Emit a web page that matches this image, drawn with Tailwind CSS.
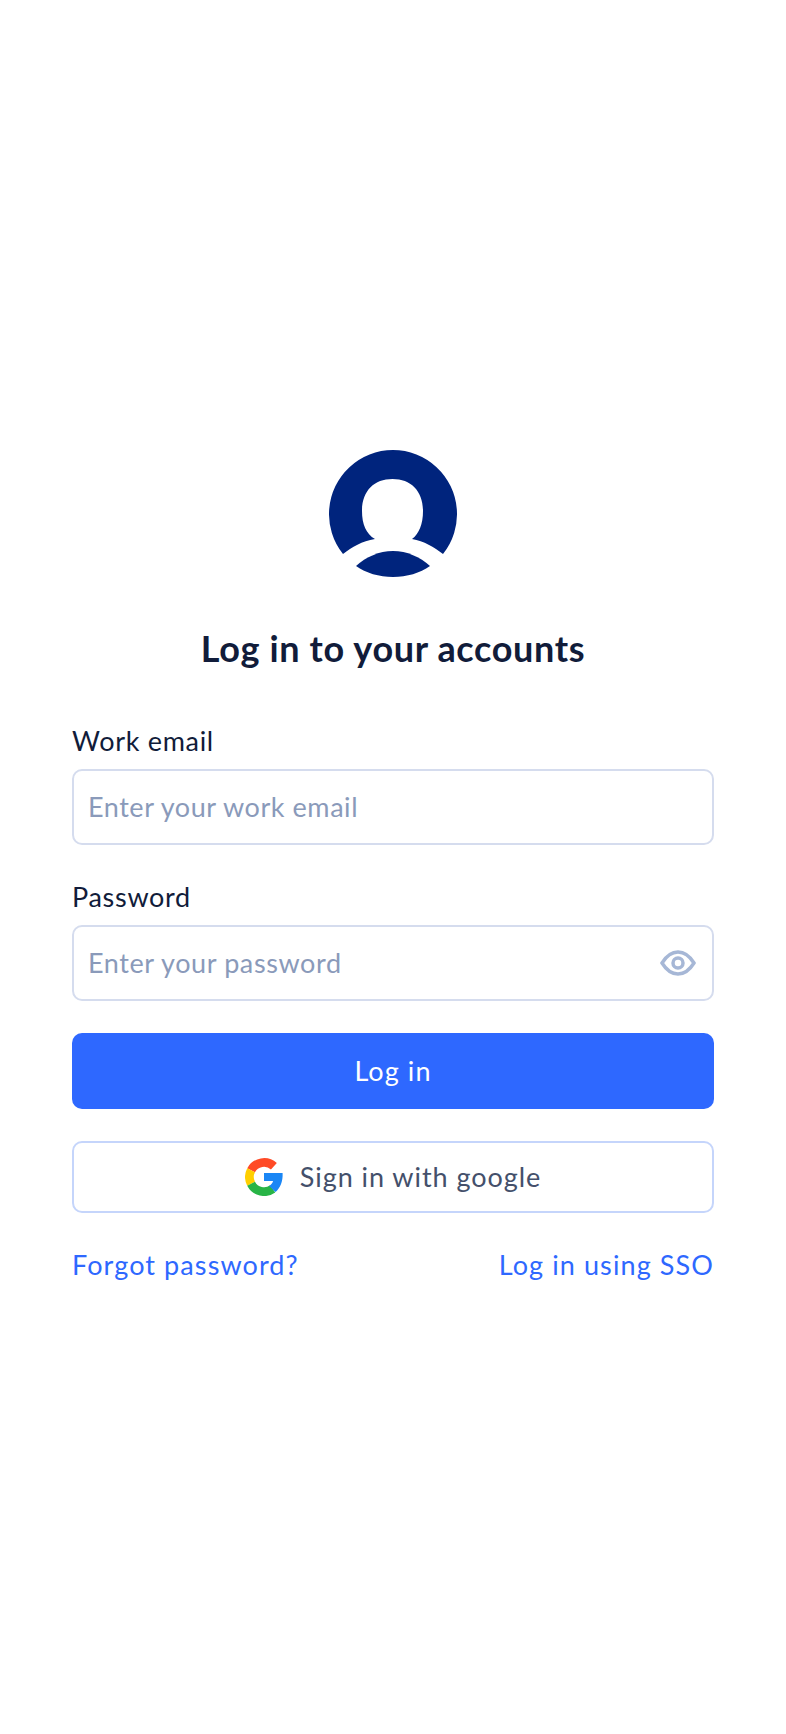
<!DOCTYPE html>
<html lang="en">
<head>
  <meta charset="UTF-8" />
  <meta name="viewport" content="width=device-width, initial-scale=1.0" />
  <title>Log in</title>
  <script src="https://cdn.jsdelivr.net/npm/@tailwindcss/browser@4"></script>
</head>
<body class="bg-white font-['Lato',sans-serif]">
  <main class="w-[786px] h-[1734px] px-[72px] pt-[449px] flex flex-col">
    <svg class="w-[128px] h-[128px] self-center shrink-0" viewBox="0 0 128 128">
      <path fill="#00247d" d="M14 105A64 64 0 1 1 114 105C105 98 95 92 83 90C90 85 94 75 94 62C94 42 82 30 63.500 30C45 30 33 42 33 62C33 75 37 85 46 90C33 92 23 98 14 105Z" />
      <path fill="#00247d" d="M27 117C37 108 50 102 64 102C78 102 91 108 101 117C91 124 78 128 64 128C50 128 37 124 27 117Z" />
    </svg>

    <h1 class="mt-[48px] text-center text-[36px] leading-[46px] font-bold tracking-[0.65px] text-[#111c3a]">Log in to your accounts</h1>

    <form class="mt-[52px] flex flex-col">
      <label class="text-[27px] leading-[36px] tracking-[0.7px] text-[#111c3a]">Work email</label>
      <div class="mt-[10px] h-[76px] flex items-center px-[14px] border-2 border-[#d5dcee] rounded-[10px] text-[27px] tracking-[0.55px] text-[#8a9aba]">Enter your work email</div>

      <label class="mt-[34px] text-[27px] leading-[36px] tracking-[0.7px] text-[#111c3a]">Password</label>
      <div class="mt-[10px] h-[76px] flex items-center justify-between pl-[14px] pr-[16px] border-2 border-[#d5dcee] rounded-[10px] text-[27px] tracking-[0.6px] text-[#8a9aba]">
        <span>Enter your password</span>
        <svg class="w-[36px] h-[26px]" viewBox="0 0 36 26" fill="none" stroke="#a6b7d6" stroke-width="3.500">
          <path d="M2 13C7 5 12 2 18 2s11 3 16 11c-5 8-10 11-16 11S7 21 2 13Z" />
          <circle cx="18" cy="13" r="5" />
        </svg>
      </div>

      <button type="button" class="mt-[32px] h-[76px] rounded-[10px] bg-[#2e68ff] text-white text-[27px] tracking-[1.1px]">Log in</button>

      <button type="button" class="mt-[32px] h-[72px] flex items-center justify-center gap-[17px] rounded-[10px] border-2 border-[#c5d5fb] text-[27px] tracking-[0.95px] text-[#44506b]">
        <svg class="w-[38px] h-[38px]" viewBox="0 0 48 48" fill="none" stroke-width="11">
          <path stroke="#ff4a26" d="M36.500 10.500A18.500 18.500 0 0 0 7.700 15.500" />
          <path stroke="#ffcf00" d="M7.700 15.500A18.500 18.500 0 0 0 7.700 32.500" />
          <path stroke="#28b446" d="M7.700 32.500A18.500 18.500 0 0 0 35 39" />
          <path fill="#1a86f5" stroke="none" d="M24 19H47.500C48 30 44.500 38 38.500 43L30.500 35.500C33 33.800 34.800 31.500 35.500 29H24Z" />
        </svg>
        <span>Sign in with google</span>
      </button>

      <div class="mt-[34px] flex justify-between text-[27px] leading-[36px] tracking-[1.1px] text-[#2e68ff]">
        <a href="#">Forgot password?</a>
        <a href="#">Log in using SSO</a>
      </div>
    </form>
  </main>
</body>
</html>
